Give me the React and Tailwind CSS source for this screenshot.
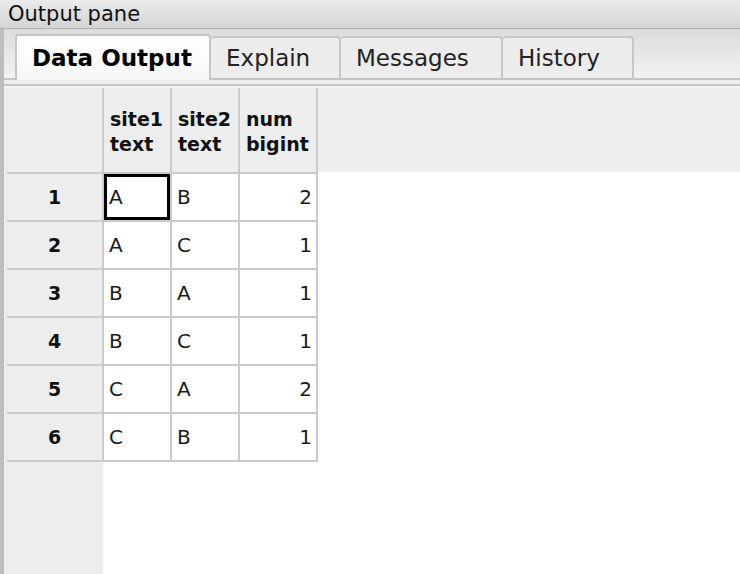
import React from 'react';

const rows = [
  ['1', 'A', 'B', '2'],
  ['2', 'A', 'C', '1'],
  ['3', 'B', 'A', '1'],
  ['4', 'B', 'C', '1'],
  ['5', 'C', 'A', '2'],
  ['6', 'C', 'B', '1'],
];

const tabs = [
  { label: 'Data Output', w: 'w-[196px]' },
  { label: 'Explain', w: 'w-[130px]' },
  { label: 'Messages', w: 'w-[162px]' },
  { label: 'History', w: 'w-[131px]' },
];

const App = () => {
  return (
    <div className="flex flex-col h-screen overflow-hidden bg-[#ececec] text-[#1a1a1a]" style={{ fontFamily: '"DejaVu Sans", Verdana, sans-serif' }}>
      {/* Title bar */}
      <div className="h-[29px] shrink-0 flex items-center pl-[8px] bg-gradient-to-b from-[#ebebeb] to-[#d4d4d4] border-b border-[#b3b3b3] text-[21px] leading-none text-[#111]">
        Output pane
      </div>

      <div className="flex flex-1 overflow-hidden">
        {/* left edge bar */}
        <div className="w-[4px] shrink-0 bg-[#bdbdbd]" />

        <div className="flex-1 flex flex-col overflow-hidden">
          {/* Tab strip */}
          <div className="h-[51px] shrink-0 flex items-end pl-[11px] bg-gradient-to-b from-[#dcdcdc] to-[#f2f2f2] border-b-2 border-[#c4c4c4]">
            {tabs.map((t, i) =>
              i === 0 ? (
                <div
                  key={t.label}
                  className={`${t.w} h-[46px] -mb-[2px] flex items-center pl-[15px] rounded-t-[4px] border-2 border-b-0 border-[#c6c6c6] bg-gradient-to-b from-white to-[#f7f7f7] font-bold text-[23px] text-black`}
                >
                  {t.label}
                </div>
              ) : (
                <div
                  key={t.label}
                  className={`${t.w} h-[42px] flex items-center pl-[15px] rounded-t-[4px] border-2 border-l-0 border-b-0 border-[#c6c6c6] bg-[#ececec] text-[23px] text-[#222]`}
                >
                  {t.label}
                </div>
              )
            )}
          </div>

          <div className="h-[6px] shrink-0 bg-[#eeeeee] border-b-2 border-[#c6c6c6]" />
          <div className="h-[2px] shrink-0 bg-[#f3f3f3]" />

          {/* Table */}
          <div className="flex flex-1 overflow-hidden pl-[3px]">
            <div className="w-[311px] shrink-0 flex flex-col">
              <div className="grid grid-cols-[95px_66px_66px_76px] grid-rows-[84px_repeat(6,46px)] gap-[2px] bg-[#cacaca] pb-[2px] pr-[2px]">
                <div className="bg-[#ededed]" />
                {[
                  ['site1', 'text'],
                  ['site2', 'text'],
                  ['num', 'bigint'],
                ].map(([a, b]) => (
                  <div key={a} className="bg-[#ededed] flex flex-col justify-center pl-[6px] pt-[4px] font-bold text-[19px] leading-[25px] text-[#111]">
                    <span>{a}</span>
                    <span>{b}</span>
                  </div>
                ))}
                {rows.map(([n, a, b, c], i) => (
                  <React.Fragment key={n}>
                    <div className="bg-[#ededed] flex items-center justify-center font-bold text-[19px] text-[#111]">{n}</div>
                    <div className={`bg-white flex items-center pl-[5px] text-[20px] ${i === 0 ? 'shadow-[inset_0_0_0_3px_black]' : ''}`}>{a}</div>
                    <div className="bg-white flex items-center pl-[5px] text-[20px]">{b}</div>
                    <div className="bg-white flex items-center justify-end pr-[4px] text-[20px]">{c}</div>
                  </React.Fragment>
                ))}
              </div>
              <div className="flex flex-1">
                <div className="w-[96px] bg-[#ededed]" />
                <div className="flex-1 bg-white" />
              </div>
            </div>
            <div className="flex-1 flex flex-col">
              <div className="h-[84px] bg-[#eeeeee]" />
              <div className="flex-1 bg-white" />
            </div>
          </div>
        </div>
      </div>
    </div>
  );
};

export default App;
